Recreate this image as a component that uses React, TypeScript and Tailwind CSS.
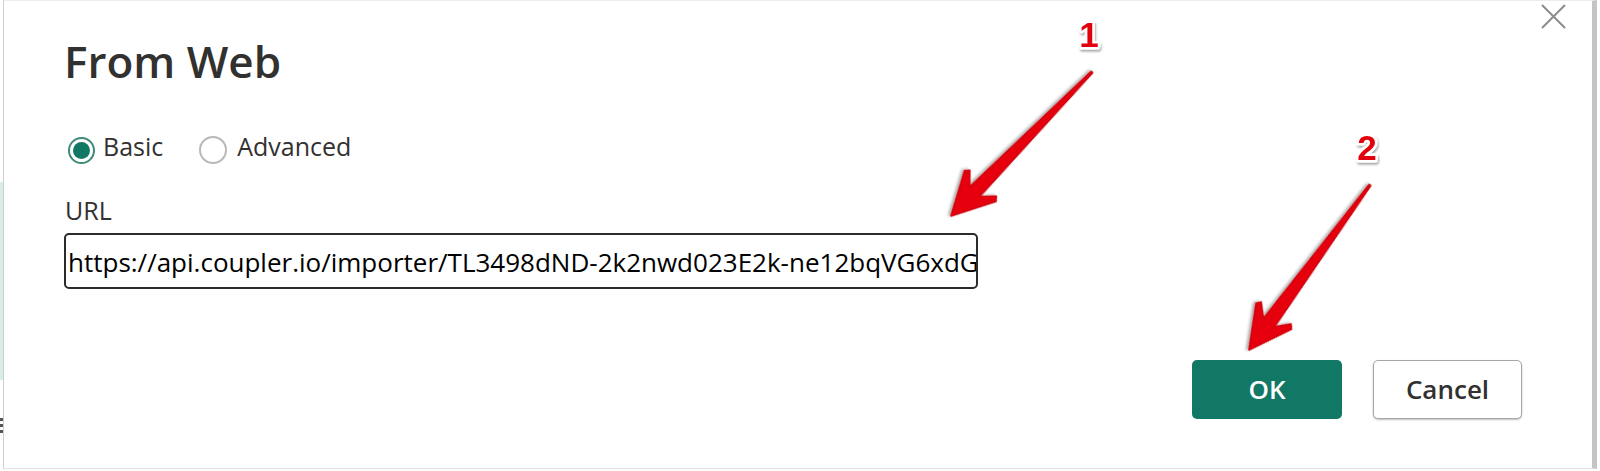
import React from "react";

function Arrow({ x1, y1, x2, y2 }: { x1: number; y1: number; x2: number; y2: number }) {
  const dx = x2 - x1;
  const dy = y2 - y1;
  const L = Math.sqrt(dx * dx + dy * dy);
  const ang = (Math.atan2(dy, dx) * 180) / Math.PI;
  const pts = `0,-1 ${L - 34},-7 ${L - 46},-18.5 ${L - 42},-22 ${L},0 ${L - 42},22 ${L - 46},18.5 ${L - 34},7 0,1`;
  return (
    <g transform={`translate(${x1} ${y1}) rotate(${ang})`} filter="url(#ashadow)">
      <polygon points={pts} fill="#e6000a" stroke="#d00008" strokeWidth={1.5} strokeLinejoin="round" />
    </g>
  );
}

function Num({ x, y, t }: { x: number; y: number; t: string }) {
  return (
    <text
      x={x}
      y={y}
      fontFamily="'Liberation Sans', Arial, sans-serif"
      fontWeight={700}
      fontSize={35}
      fill="#e3000b"
      stroke="#ffffff"
      strokeWidth={5}
      strokeLinejoin="round"
      paintOrder="stroke"
      filter="url(#tshadow)"
      textAnchor="middle"
    >
      {t}
    </text>
  );
}

export default function App() {
  return (
    <div
      className="relative w-[1600px] h-[471px] bg-white flex overflow-hidden"
      style={{ fontFamily: "'Open Sans', 'Noto Sans', sans-serif" }}
    >
      <div className="w-[3px] flex flex-col shrink-0">
        <div className="h-[182px]" />
        <div className="h-[198px] bg-[#d7eee2]" />
        <div className="h-[38px]" />
        <div className="h-[3px] bg-[#555]" />
        <div className="h-[3px]" />
        <div className="h-[3px] bg-[#555]" />
        <div className="h-[3px]" />
        <div className="h-[3px] bg-[#555]" />
      </div>
      <div className="relative w-[1594px] h-[469px] shrink-0 border-l border-l-[#cfcfcf] border-r-[5px] border-r-[#c4c4c4] border-t border-t-[#ededed] border-b border-b-[#e3e3e3] pl-[60px] pr-[70px] flex flex-col">
        <button className="absolute right-[25px] top-[2px] w-[27px] h-[27px] flex items-center justify-center">
          <svg width="27" height="27" viewBox="0 0 27 27">
            <path d="M2 2 L25 25 M25 2 L2 25" stroke="#8c8c8c" strokeWidth="2" fill="none" />
          </svg>
        </button>

        <div className="mt-[34px] text-[44px] leading-[52px] font-semibold text-[#323130]">From Web</div>

        <div className="mt-[44px] flex items-center h-[30px] text-[25px] leading-[30px] text-[#323130]">
          <span className="ml-[4px] mt-[8px] w-[27px] h-[27px] rounded-full border-2 border-[#3d8a77] flex items-center justify-center shrink-0">
            <span className="w-[17px] h-[17px] rounded-full bg-[#117865]" />
          </span>
          <span className="ml-[8px]">Basic</span>
          <span className="ml-[36px] mt-[8px] w-[28px] h-[28px] rounded-full border-2 border-[#b8b8b8] bg-white shrink-0" />
          <span className="ml-[10px]">Advanced</span>
        </div>

        <div className="mt-[34px] text-[25px] leading-[30px] text-[#323130] ml-[1px]">URL</div>

        <div className="mt-[8px] w-[914px] h-[56px] border-2 border-[#2b2b2b] rounded-[5px] pl-[2px] pt-[2px] overflow-hidden whitespace-nowrap text-[26px] leading-[50px] text-black">
          https://api.coupler.io/importer/TL3498dND-2k2nwd023E2k-ne12bqVG6xdG
        </div>

        <div className="mt-[71px] flex justify-end gap-[31px]">
          <button className="w-[150px] h-[59px] rounded-[5px] bg-[#117865] text-white text-[26px] font-semibold flex items-center justify-center">
            OK
          </button>
          <button className="w-[149px] h-[59px] rounded-[5px] bg-white border border-[#a6a6a6] shadow-[0_1px_2px_rgba(0,0,0,0.25)] text-[#323130] text-[26px] font-semibold flex items-center justify-center">
            Cancel
          </button>
        </div>
      </div>

      <svg className="absolute inset-0 pointer-events-none" width="1600" height="471" viewBox="0 0 1600 471">
        <defs>
          <filter id="ashadow" x="-20%" y="-50%" width="140%" height="200%">
            <feDropShadow dx="1" dy="2" stdDeviation="1.5" floodColor="#000" floodOpacity="0.35" />
          </filter>
          <filter id="tshadow" x="-50%" y="-50%" width="200%" height="200%">
            <feDropShadow dx="1" dy="2" stdDeviation="1.2" floodColor="#000" floodOpacity="0.35" />
          </filter>
        </defs>
        <Arrow x1={1092} y1={72} x2={951} y2={216} />
        <Arrow x1={1370} y1={185} x2={1249} y2={350} />
        <Num x={1089} y={47} t="1" />
        <Num x={1367} y={160} t="2" />
      </svg>
    </div>
  );
}
